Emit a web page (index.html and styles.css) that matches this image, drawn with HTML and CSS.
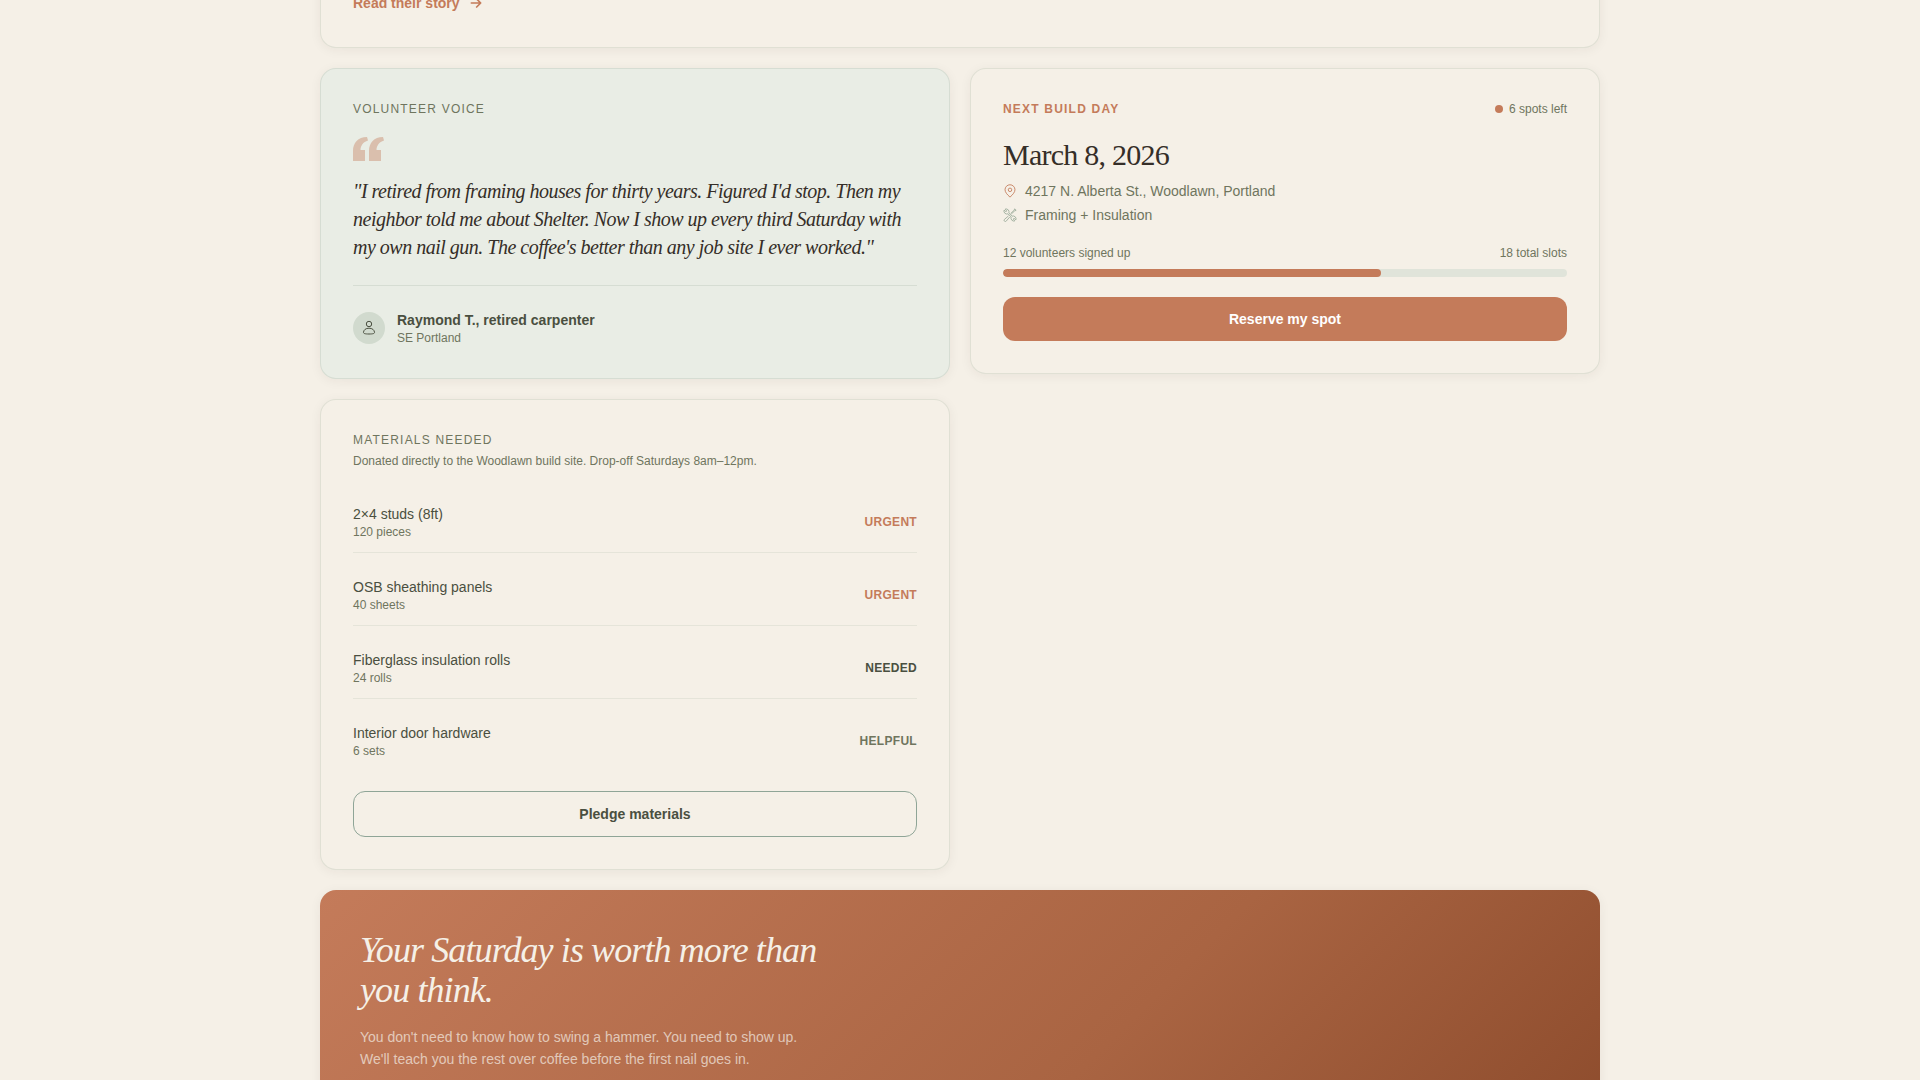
FILE: index.html
```html
<!DOCTYPE html>
<html lang="en">
<head>
    <meta charset="UTF-8">
    <meta name="viewport" content="width=device-width, initial-scale=1.0">
    <title>Shelter</title>
    <link rel="stylesheet" href="styles.css">
</head>
<body>
    <main class="grid">
        <!-- Story Card -->
        <article class="card wide">
            <a class="story-link" href="#story">
                Read their story
                <svg width="16" height="16" viewBox="0 0 24 24" fill="none" stroke="currentColor" stroke-width="2.5" stroke-linecap="round" stroke-linejoin="round"><path d="M5 12h14M13 6l6 6-6 6"/></svg>
            </a>
        </article>

        <!-- Volunteer Card -->
        <article class="card voice">
            <h2 class="label">Volunteer voice</h2>
            <svg class="quote-mark" width="32" height="24" viewBox="0 0 32 24"><path d="M0 24V14C0 6 5 0 14 0l1 3.500C10 5 7.500 9 7.500 13H12v11zM16 24V14C16 6 21 0 30 0l1 3.500C26 5 23.500 9 23.500 13H28v11z"/></svg>
            <blockquote>"I retired from framing houses for thirty years. Figured I'd stop. Then my neighbor told me about Shelter. Now I show up every third Saturday with my own nail gun. The coffee's better than any job site I ever worked."</blockquote>
            <footer class="author">
                <span class="avatar">
                    <svg width="16" height="16" viewBox="0 0 16 16" fill="none" stroke="currentColor" stroke-width="1"><circle cx="8" cy="4" r="2.700"/><path d="M2.500 12.500c0-2.500 2.200-4.300 5.500-4.300s5.500 1.800 5.500 4.300c0 1-1.500 1.500-5.500 1.500s-5.500-.5-5.500-1.500z"/></svg>
                </span>
                <div>
                    <p class="author-name">Raymond T., retired carpenter</p>
                    <p class="small">SE Portland</p>
                </div>
            </footer>
        </article>

        <!-- Build Day Card -->
        <article class="card">
            <header class="between">
                <h2 class="label accent">Next build day</h2>
                <p class="small spots">6 spots left</p>
            </header>
            <h3 class="date">March 8, 2026</h3>
            <ul class="details">
                <li>
                    <svg class="pin" width="14" height="14" viewBox="0 0 24 24" fill="none" stroke="currentColor" stroke-width="1.500"><path d="M12 22.500C7 18 3.500 14 3.500 9.800a8.500 8.500 0 0 1 17 0C20.500 14 17 18 12 22.500z"/><circle cx="12" cy="10" r="3"/></svg>
                    4217 N. Alberta St., Woodlawn, Portland
                </li>
                <li>
                    <svg class="tools" width="14" height="14" viewBox="0 0 24 24" fill="none" stroke="currentColor" stroke-width="1.500" stroke-linejoin="round"><path d="M14 10.500L20 5l2.500-1L20 1.500l-1 2.500-6 5.500M9.500 13.500l-7 6a2 2 0 0 0 3 3l6-7M10 8.500A5 5 0 0 0 3.500 2l3 3L5 6.500l-3-3A5 5 0 0 0 8.500 10L14 15.500a5 5 0 0 0 6.500 6.500l-3-3 1.500-1.500 3 3A5 5 0 0 0 15.500 14z"/></svg>
                    Framing + Insulation
                </li>
            </ul>
            <div class="between small">
                <span>12 volunteers signed up</span>
                <span>18 total slots</span>
            </div>
            <div class="bar" role="progressbar" aria-valuenow="12" aria-valuemax="18" aria-label="Volunteers signed up">
                <div class="bar-fill" style="width: 67%"></div>
            </div>
            <button class="btn btn-primary" type="button">Reserve my spot</button>
        </article>

        <!-- Materials Card -->
        <article class="card">
            <h2 class="label">Materials needed</h2>
            <p class="small note">Donated directly to the Woodlawn build site. Drop-off Saturdays 8am–12pm.</p>
            <ul class="materials">
                <li>
                    <div>
                        <p class="item">2×4 studs (8ft)</p>
                        <p class="small">120 pieces</p>
                    </div>
                    <span class="tag urgent">Urgent</span>
                </li>
                <li>
                    <div>
                        <p class="item">OSB sheathing panels</p>
                        <p class="small">40 sheets</p>
                    </div>
                    <span class="tag urgent">Urgent</span>
                </li>
                <li>
                    <div>
                        <p class="item">Fiberglass insulation rolls</p>
                        <p class="small">24 rolls</p>
                    </div>
                    <span class="tag needed">Needed</span>
                </li>
                <li>
                    <div>
                        <p class="item">Interior door hardware</p>
                        <p class="small">6 sets</p>
                    </div>
                    <span class="tag">Helpful</span>
                </li>
            </ul>
            <button class="btn btn-outline" type="button">Pledge materials</button>
        </article>

        <!-- Call to action -->
        <section class="cta wide">
            <h2>Your Saturday is worth more than you think.</h2>
            <p>You don't need to know how to swing a hammer. You need to show up. We'll teach you the rest over coffee before the first nail goes in.</p>
        </section>
    </main>
</body>
</html>
```

FILE: styles.css
```css
:root {
    --cream: #f5f0e7;
    --clay: #c47b5a;
    --moss: #6f755e;
    --bark: #4a4f40;
    --ink: #352e28;
    --line: rgba(138, 158, 140, 0.2);
}
* {
    padding: 0;
    margin: 0;
    box-sizing: border-box;
}
body {
    background-color: var(--cream);
    color: var(--moss);
    font-family: "Liberation Sans", Arial, sans-serif;
    font-size: 14px;
    line-height: 20px;
    height: 100vh;
    overflow: hidden;
}
ul {
    list-style: none;
}
svg {
    display: block;
    flex-shrink: 0;
}

/* GRID */
.grid {
    max-width: 1280px;
    margin: -42px auto 0;
    display: grid;
    grid-template-columns: 1fr 1fr;
    align-items: start;
    gap: 20px;
}
.wide {
    grid-column: 1 / -1;
}
.card {
    background-color: var(--cream);
    border: 1px solid var(--line);
    border-radius: 16px;
    padding: 32px;
    box-shadow: 0 2px 12px rgba(44, 42, 38, 0.06);
}
.between {
    display: flex;
    justify-content: space-between;
    align-items: center;
}
.label {
    font-size: 12px;
    font-weight: 400;
    line-height: 16px;
    letter-spacing: 0.1em;
    text-transform: uppercase;
}
.label.accent {
    color: var(--clay);
    font-weight: 700;
}
.small {
    font-size: 12px;
    line-height: 16px;
}

/* STORY */
.story-link {
    display: flex;
    align-items: center;
    gap: 8px;
    color: var(--clay);
    font-weight: 700;
    line-height: 24px;
    text-decoration: none;
}

/* VOICE */
.voice {
    background-color: #e9ede5;
}
.quote-mark {
    margin: 20px 0 16px;
    fill: var(--clay);
    opacity: 0.4;
}
blockquote {
    color: var(--ink);
    font-family: "Liberation Serif", "Times New Roman", serif;
    font-size: 20px;
    font-style: italic;
    line-height: 28px;
    letter-spacing: -0.025em;
}
.author {
    display: flex;
    align-items: center;
    gap: 12px;
    margin-top: 24px;
    padding-top: 24px;
    border-top: 1px solid var(--line);
}
.avatar {
    width: 32px;
    height: 32px;
    border-radius: 50%;
    background-color: #d1dace;
    color: var(--bark);
    display: flex;
    justify-content: center;
    align-items: center;
}
.author-name {
    color: var(--bark);
    font-weight: 700;
}

/* BUILD DAY */
.spots {
    display: flex;
    align-items: center;
    gap: 6px;
}
.spots::before {
    content: "";
    width: 8px;
    height: 8px;
    border-radius: 50%;
    background-color: var(--clay);
}
.date {
    margin: 20px 0 8px;
    color: var(--ink);
    font-family: "Liberation Serif", "Times New Roman", serif;
    font-size: 30px;
    font-weight: 400;
    line-height: 36px;
    letter-spacing: -0.025em;
}
.details {
    display: grid;
    gap: 4px;
    margin-bottom: 20px;
}
.details li {
    display: flex;
    align-items: center;
    gap: 8px;
}
.pin {
    color: var(--clay);
}
.tools {
    color: #9cac9a;
}
.bar {
    height: 8px;
    margin: 8px 0 20px;
    border-radius: 4px;
    background-color: #e0e4da;
    overflow: hidden;
}
.bar-fill {
    height: 100%;
    border-radius: 4px;
    background-color: var(--clay);
}
.btn {
    display: block;
    width: 100%;
    padding: 12px 24px;
    border: none;
    border-radius: 12px;
    font-family: inherit;
    font-size: 14px;
    font-weight: 700;
    line-height: 20px;
    cursor: pointer;
}
.btn-primary {
    background-color: var(--clay);
    color: #fff;
}
.btn-outline {
    background-color: transparent;
    border: 1px solid #8fa597;
    color: var(--bark);
}

/* MATERIALS */
.note {
    margin: 4px 0 22px;
    line-height: 18px;
}
.materials {
    display: grid;
    gap: 12px;
    margin-bottom: 20px;
}
.materials li {
    display: flex;
    justify-content: space-between;
    align-items: center;
    padding: 12px 0;
    border-bottom: 1px solid rgba(138, 158, 140, 0.15);
}
.materials li:last-child {
    border-bottom: none;
}
.item {
    color: var(--bark);
}
.tag {
    font-size: 12px;
    font-weight: 700;
    line-height: 16px;
    letter-spacing: 0.025em;
    text-transform: uppercase;
}
.tag.urgent {
    color: var(--clay);
}
.tag.needed {
    color: var(--bark);
}

/* CTA */
.cta {
    padding: 40px 40px 108px;
    border-radius: 16px;
    background-image: linear-gradient(135deg, #c47b5a, #a96442 60%, #8b4a2b);
    box-shadow: 0 2px 12px rgba(44, 42, 38, 0.06);
    color: rgba(245, 240, 232, 0.7);
    line-height: 22px;
}
.cta h2 {
    max-width: 480px;
    margin-bottom: 16px;
    color: var(--cream);
    font-family: "Liberation Serif", "Times New Roman", serif;
    font-size: 36px;
    font-style: italic;
    font-weight: 400;
    line-height: 40px;
    letter-spacing: -0.025em;
}
.cta p {
    max-width: 448px;
}

@media (max-width: 800px) {
    .grid {
        grid-template-columns: 1fr;
    }
}
```
